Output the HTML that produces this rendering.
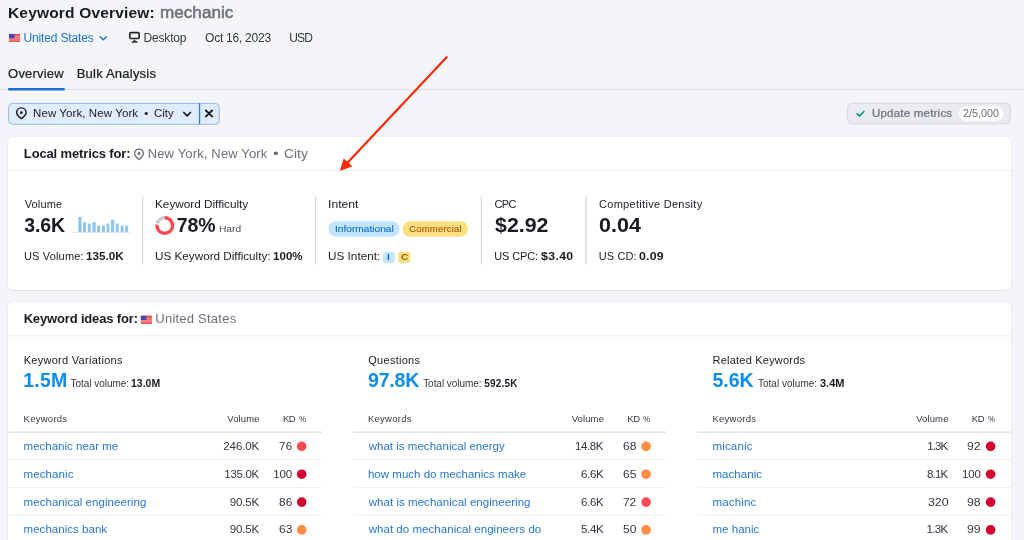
<!DOCTYPE html>
<html><head><meta charset="utf-8">
<style>
*{box-sizing:border-box;margin:0;padding:0}
html,body{width:1024px;height:540px;overflow:hidden;background:#f4f5f9;font-family:"Liberation Sans",sans-serif;color:#191b23}
.t,svg,.card{position:absolute}
.t{white-space:nowrap;line-height:1;transform-origin:0 0}
body{filter:blur(0.4px)}
.card{left:8px;width:1003px;background:#fff;border-radius:5px;box-shadow:0 0 0 1px rgba(25,27,35,.028),0 1px 1.5px rgba(25,27,35,.06)}
</style></head><body>
<div class="card" style="top:137px;height:153px"></div>
<div class="card" style="top:302px;height:260px"></div>
<svg style="left:0;top:0" width="1024" height="540" viewBox="0 0 1024 540">
<rect x="0" y="89" width="1024" height="1" fill="#e0e1e8"/>
<rect x="8" y="88" width="56.8" height="2.5" rx="1" fill="#1c6fd1"/>
<g transform="translate(9 33.9)"><rect width="11.1" height="8.1" rx="0.6" fill="#fc8686"/><rect y="0" width="11.1" height="1.7" rx="0.5" fill="#ff4239"/><rect y="3.1" width="11.1" height="1.1" fill="#fd6e6c"/><rect y="5.2" width="11.1" height="0.9" fill="#fb7272"/><rect y="6.9" width="11.1" height="1.2" rx="0.5" fill="#ea4d52"/><rect width="5.6" height="4.3" rx="0.5" fill="#4248b8"/></g>
<path d="M100.2 36.7 L103.3 39.8 L106.4 36.7" fill="none" stroke="#1b72cf" stroke-width="1.5" stroke-linecap="round" stroke-linejoin="round"/>
<g transform="translate(128 31)"><rect x="1.85" y="1.7" width="9.3" height="5.8" rx="1.1" fill="none" stroke="#262932" stroke-width="1.7"/><path d="M6.5 8.3 L8 10.4 L5 10.4 Z" fill="#262932"/><rect x="3.5" y="10.2" width="6.2" height="1.5" rx="0.7" fill="#262932"/></g>
<rect x="8.6" y="103.4" width="210.6" height="20.9" rx="4" fill="#e0ebfb" stroke="#8fb9eb" stroke-width="1"/>
<rect x="198.9" y="103.1" width="1.3" height="21" fill="#2f7fd8"/>
<path d="M21.35 107.85 C18.6 107.85 16.6 109.9 16.6 112.5 C16.6 115.2 19.3 117.2 21.35 118.6 C23.4 117.2 26.1 115.2 26.1 112.5 C26.1 109.9 24.1 107.85 21.35 107.85 Z" fill="none" stroke="#191b23" stroke-width="1.45" stroke-linejoin="round"/>
<circle cx="21.35" cy="112.65" r="1.45" fill="#191b23"/>
<path d="M183.8 112.5 L187.1 115.8 L190.4 112.5" fill="none" stroke="#191b23" stroke-width="1.7" stroke-linecap="round" stroke-linejoin="round"/>
<path d="M205.9 110.5 L212.1 116.4 M212.1 110.5 L205.9 116.4" fill="none" stroke="#191b23" stroke-width="1.9" stroke-linecap="round"/>
<rect x="847.7" y="103.3" width="162.5" height="20.5" rx="4" fill="#e9ebf1" stroke="#d6d8e0" stroke-width="1"/>
<path d="M857.2 113.9 L859.6 116.0 L863.9 111.5" fill="none" stroke="#0f9a7a" stroke-width="1.7" stroke-linecap="round" stroke-linejoin="round"/>
<rect x="958.6" y="106.3" width="44.9" height="14.6" rx="7.3" fill="#fff"/>
<rect x="8.3" y="169.8" width="1002.5" height="1" fill="#eaebf0"/>
<g transform="translate(133 147.8)"><path d="M6 1.25 C3.5 1.25 1.65 3.1 1.65 5.6 C1.65 8.3 4.3 10.3 6 11.7 C7.7 10.3 10.35 8.3 10.35 5.6 C10.35 3.1 8.5 1.25 6 1.25 Z" fill="none" stroke="#6c6e79" stroke-width="1.35" stroke-linejoin="round"/><circle cx="6" cy="5.65" r="1.45" fill="#6c6e79"/></g>
<rect x="142.2" y="196.3" width="1" height="68" fill="#cfd2d9"/>
<rect x="314.9" y="196.3" width="1" height="68" fill="#cfd2d9"/>
<rect x="480.8" y="196.3" width="1" height="68" fill="#cfd2d9"/>
<rect x="585.4" y="196.3" width="1" height="68" fill="#cfd2d9"/>
<rect x="72.5" y="232.1" width="57.5" height="0.9" fill="#e4e6ec"/>
<g fill="#90c6f1"><rect x="78.3" y="216.8" width="3.3" height="15.4"/><rect x="83.0" y="222.2" width="3.0" height="10"/><rect x="87.8" y="223.6" width="3.0" height="8.6"/><rect x="92.4" y="222.2" width="3.3" height="10"/><rect x="97.1" y="225.7" width="3.0" height="6.5"/><rect x="101.9" y="225.7" width="3.0" height="6.5"/><rect x="106.6" y="223.6" width="2.9" height="8.6"/><rect x="111.0" y="219.8" width="3.3" height="12.4"/><rect x="115.8" y="223.6" width="3.0" height="8.6"/><rect x="120.6" y="225.7" width="3.0" height="6.5"/><rect x="125.1" y="225.7" width="3.1" height="6.5"/></g>
<circle cx="164.75" cy="225.55" r="7.83" fill="none" stroke="#c9ccd5" stroke-width="3.25"/>
<circle cx="164.75" cy="225.55" r="7.83" fill="none" stroke="#ff4651" stroke-width="3.25" stroke-dasharray="38.1 49.2" transform="rotate(-90 164.75 225.55)"/>
<rect x="0" y="0" width="1.2" height="4" fill="#fff" transform="translate(164.75 225.55) rotate(-79) translate(-0.6 -10)"/>
<rect x="328.3" y="221.3" width="71.4" height="15.4" rx="7.7" fill="#c4e5fe"/>
<rect x="402.5" y="221.3" width="65.5" height="15.4" rx="7.7" fill="#fbdf80"/>
<rect x="382.8" y="251.7" width="12" height="11.4" rx="3" fill="#c4e5fe"/>
<rect x="398.3" y="251.7" width="12.2" height="11.4" rx="3" fill="#fbdf80"/>
<rect x="8.3" y="335.3" width="1002.5" height="1" fill="#eaebf0"/>
<g transform="translate(140.9 315.8)"><rect width="11.1" height="8.1" rx="0.6" fill="#fc8686"/><rect y="0" width="11.1" height="1.7" rx="0.5" fill="#ff4239"/><rect y="3.1" width="11.1" height="1.1" fill="#fd6e6c"/><rect y="5.2" width="11.1" height="0.9" fill="#fb7272"/><rect y="6.9" width="11.1" height="1.2" rx="0.5" fill="#ea4d52"/><rect width="5.6" height="4.3" rx="0.5" fill="#4248b8"/></g>
<rect x="8.3" y="431.4" width="313.5" height="1.5" fill="#dfe0e8"/>
<rect x="8.3" y="458.9" width="313.5" height="1" fill="#eceef2"/>
<rect x="8.3" y="486.8" width="313.5" height="1" fill="#eceef2"/>
<rect x="8.3" y="514.7" width="313.5" height="1" fill="#eceef2"/>
<rect x="353.1" y="431.4" width="312.7" height="1.5" fill="#dfe0e8"/>
<rect x="353.1" y="458.9" width="312.7" height="1" fill="#eceef2"/>
<rect x="353.1" y="486.8" width="312.7" height="1" fill="#eceef2"/>
<rect x="353.1" y="514.7" width="312.7" height="1" fill="#eceef2"/>
<rect x="697.3" y="431.4" width="313.5" height="1.5" fill="#dfe0e8"/>
<rect x="697.3" y="458.9" width="313.5" height="1" fill="#eceef2"/>
<rect x="697.3" y="486.8" width="313.5" height="1" fill="#eceef2"/>
<rect x="697.3" y="514.7" width="313.5" height="1" fill="#eceef2"/>
<circle cx="301.7" cy="446.4" r="4.8" fill="#ff4953"/>
<circle cx="301.7" cy="474.2" r="4.8" fill="#d1002f"/>
<circle cx="301.7" cy="502.1" r="4.8" fill="#d1002f"/>
<circle cx="301.7" cy="529.9" r="4.8" fill="#ff8c43"/>
<circle cx="646.1" cy="446.4" r="4.8" fill="#ff8c43"/>
<circle cx="646.1" cy="474.2" r="4.8" fill="#ff8c43"/>
<circle cx="646.1" cy="502.1" r="4.8" fill="#ff4953"/>
<circle cx="646.1" cy="529.9" r="4.8" fill="#ff8c43"/>
<circle cx="990.6" cy="446.4" r="4.8" fill="#d1002f"/>
<circle cx="990.6" cy="474.2" r="4.8" fill="#d1002f"/>
<circle cx="990.6" cy="502.1" r="4.8" fill="#d1002f"/>
<circle cx="990.6" cy="529.9" r="4.8" fill="#d1002f"/>
<line x1="447.3" y1="56.6" x2="347" y2="163.3" stroke="#fd2808" stroke-width="2.2"/><polygon points="339.8,171 343.7,158.4 352.5,166.2" fill="#fd2808"/>
</svg>
<div class="t" style="left:8.0px;top:5px;font-size:15.5px;color:#191b23;font-weight:bold;letter-spacing:0.175px;">Keyword Overview:</div>
<div class="t" style="left:159.82px;top:4px;font-size:16.5px;color:#6c6e79;-webkit-text-stroke:0.5px #6c6e79;transform:scaleX(1.038);">mechanic</div>
<div class="t" style="left:23.5px;top:32px;font-size:12.0px;color:#1b72cf;letter-spacing:-0.146px;">United States</div>
<div class="t" style="left:143.4px;top:32px;font-size:12.0px;color:#33363f;letter-spacing:-0.15px;">Desktop</div>
<div class="t" style="left:205.1px;top:32px;font-size:12.0px;color:#33363f;letter-spacing:-0.25px;">Oct 16, 2023</div>
<div class="t" style="left:289.25px;top:32px;font-size:12.0px;color:#33363f;letter-spacing:-0.875px;">USD</div>
<div class="t" style="left:8.1px;top:67px;font-size:13.0px;color:#191b23;-webkit-text-stroke:0.23px #191b23;letter-spacing:0.2px;">Overview</div>
<div class="t" style="left:76.7px;top:67px;font-size:13.0px;color:#191b23;-webkit-text-stroke:0.23px #191b23;letter-spacing:0.221px;">Bulk Analysis</div>
<div class="t" style="left:33.0px;top:108px;font-size:11.5px;color:#191b23;letter-spacing:0.088px;">New York, New York</div>
<div class="t" style="left:143.85px;top:108px;font-size:11.5px;color:#191b23;transform:scaleX(1.108);">•</div>
<div class="t" style="left:153.9px;top:108px;font-size:11.5px;color:#191b23;letter-spacing:0.033px;">City</div>
<div class="t" style="left:871.95px;top:108px;font-size:11.5px;color:#6c6e79;-webkit-text-stroke:0.21px #6c6e79;letter-spacing:0.219px;">Update metrics</div>
<div class="t" style="left:963.46px;top:109px;font-size:10px;color:#6c6e79;transform:scaleX(1.077);">2/5,000</div>
<div class="t" style="left:23.85px;top:147px;font-size:13.0px;color:#191b23;font-weight:bold;letter-spacing:-0.141px;">Local metrics for:</div>
<div class="t" style="left:147.7px;top:147px;font-size:13.0px;color:#6c6e79;letter-spacing:0.153px;">New York, New York</div>
<div class="t" style="left:273.18px;top:147px;font-size:13.0px;color:#6c6e79;transform:scaleX(1.25);">•</div>
<div class="t" style="left:283.9px;top:147px;font-size:13.0px;color:#6c6e79;transform:scaleX(1.065);">City</div>
<div class="t" style="left:24.7px;top:199px;font-size:11.0px;color:#191b23;letter-spacing:0.15px;">Volume</div>
<div class="t" style="left:24.2px;top:216px;font-size:19.5px;color:#191b23;font-weight:bold;letter-spacing:-0.067px;">3.6K</div>
<div class="t" style="left:23.95px;top:251px;font-size:11.0px;color:#191b23;letter-spacing:0.172px;">US Volume:</div>
<div class="t" style="left:85.5px;top:251px;font-size:11.0px;color:#191b23;font-weight:bold;transform:scaleX(1.064);">135.0K</div>
<div class="t" style="left:155.0px;top:199px;font-size:11.0px;color:#191b23;transform:scaleX(1.069);">Keyword Difficulty</div>
<div class="t" style="left:176.75px;top:216px;font-size:19.5px;color:#191b23;font-weight:bold;letter-spacing:-0.125px;">78%</div>
<div class="t" style="left:218.9px;top:224px;font-size:9.5px;color:#4a4d57;transform:scaleX(1.07);">Hard</div>
<div class="t" style="left:155.0px;top:251px;font-size:11.0px;color:#191b23;transform:scaleX(1.064);">US Keyword Difficulty:</div>
<div class="t" style="left:272.51px;top:251px;font-size:11.0px;color:#191b23;font-weight:bold;transform:scaleX(1.053);">100%</div>
<div class="t" style="left:327.59px;top:199px;font-size:11.0px;color:#191b23;transform:scaleX(1.106);">Intent</div>
<div class="t" style="left:334.5px;top:224px;font-size:9.5px;color:#0b6bc9;-webkit-text-stroke:0.11px #0b6bc9;transform:scaleX(1.07);">Informational</div>
<div class="t" style="left:409.2px;top:224px;font-size:9.5px;color:#a3590a;-webkit-text-stroke:0.11px #a3590a;letter-spacing:0.206px;">Commercial</div>
<div class="t" style="left:327.9px;top:251px;font-size:11.0px;color:#191b23;transform:scaleX(1.069);">US Intent:</div>
<div class="t" style="left:387.47px;top:252px;font-size:9.5px;color:#0b6bc9;font-weight:bold;transform:scaleX(1.067);">I</div>
<div class="t" style="left:400.53px;top:252px;font-size:9.5px;color:#a3590a;font-weight:bold;transform:scaleX(1.072);">C</div>
<div class="t" style="left:494.4px;top:199px;font-size:11.0px;color:#191b23;letter-spacing:-0.525px;">CPC</div>
<div class="t" style="left:494.63px;top:216px;font-size:19.5px;color:#191b23;font-weight:bold;transform:scaleX(1.095);">$2.92</div>
<div class="t" style="left:494.15px;top:251px;font-size:11.0px;color:#191b23;letter-spacing:-0.1px;">US CPC:</div>
<div class="t" style="left:540.72px;top:251px;font-size:11.0px;color:#191b23;font-weight:bold;letter-spacing:0.304px;transform:scaleX(1.12);">$3.40</div>
<div class="t" style="left:599.0px;top:199px;font-size:11.0px;color:#191b23;letter-spacing:0.297px;">Competitive Density</div>
<div class="t" style="left:598.67px;top:216px;font-size:19.5px;color:#191b23;font-weight:bold;transform:scaleX(1.103);">0.04</div>
<div class="t" style="left:598.75px;top:251px;font-size:11.0px;color:#191b23;letter-spacing:0.12px;">US CD:</div>
<div class="t" style="left:638.84px;top:251px;font-size:11.0px;color:#191b23;font-weight:bold;letter-spacing:0.19px;transform:scaleX(1.12);">0.09</div>
<div class="t" style="left:23.65px;top:312px;font-size:13.0px;color:#191b23;font-weight:bold;letter-spacing:-0.159px;">Keyword ideas for:</div>
<div class="t" style="left:155.3px;top:312px;font-size:13.0px;color:#6c6e79;letter-spacing:0.233px;">United States</div>
<div class="t" style="left:23.65px;top:355px;font-size:11.0px;color:#191b23;letter-spacing:0.285px;">Keyword Variations</div>
<div class="t" style="left:23.15px;top:371px;font-size:19.5px;color:#0a8df2;font-weight:bold;letter-spacing:0.25px;">1.5M</div>
<div class="t" style="left:70.55px;top:379px;font-size:10.0px;color:#33363f;letter-spacing:-0.029px;">Total volume:</div>
<div class="t" style="left:131.48px;top:379px;font-size:10.0px;color:#191b23;font-weight:bold;transform:scaleX(1.047);">13.0M</div>
<div class="t" style="left:23.55px;top:414px;font-size:9.5px;color:#33363f;letter-spacing:0.264px;">Keywords</div>
<div class="t" style="left:227.3px;top:414px;font-size:9.5px;color:#33363f;letter-spacing:0.11px;">Volume</div>
<div class="t" style="left:282.95px;top:414px;font-size:9.5px;color:#33363f;letter-spacing:-0.4px;">KD</div>
<div class="t" style="left:299.07px;top:415px;font-size:8.5px;color:#33363f;transform:scaleX(0.929);">%</div>
<div class="t" style="left:23.55px;top:441px;font-size:11.5px;color:#2476cf;letter-spacing:0.007px;">mechanic near me</div>
<div class="t" style="left:223.3px;top:441px;font-size:11.5px;color:#33363f;letter-spacing:-0.09px;">246.0K</div>
<div class="t" style="left:279.1px;top:441px;font-size:11.5px;color:#33363f;letter-spacing:0.25px;">76</div>
<div class="t" style="left:23.55px;top:469px;font-size:11.5px;color:#2476cf;letter-spacing:0.107px;">mechanic</div>
<div class="t" style="left:224.35px;top:469px;font-size:11.5px;color:#33363f;letter-spacing:-0.3px;">135.0K</div>
<div class="t" style="left:273.15px;top:469px;font-size:11.5px;color:#33363f;letter-spacing:-0.15px;">100</div>
<div class="t" style="left:23.55px;top:497px;font-size:11.5px;color:#2476cf;letter-spacing:0.062px;">mechanical engineering</div>
<div class="t" style="left:229.8px;top:497px;font-size:11.5px;color:#33363f;letter-spacing:-0.175px;">90.5K</div>
<div class="t" style="left:278.88px;top:497px;font-size:11.5px;color:#33363f;transform:scaleX(1.038);">86</div>
<div class="t" style="left:23.55px;top:524px;font-size:11.5px;color:#2476cf;letter-spacing:0.035px;">mechanics bank</div>
<div class="t" style="left:229.8px;top:524px;font-size:11.5px;color:#33363f;letter-spacing:-0.175px;">90.5K</div>
<div class="t" style="left:278.88px;top:524px;font-size:11.5px;color:#33363f;transform:scaleX(1.038);">63</div>
<div class="t" style="left:368.3px;top:355px;font-size:11.0px;color:#191b23;letter-spacing:0.269px;">Questions</div>
<div class="t" style="left:368.05px;top:371px;font-size:19.5px;color:#0a8df2;font-weight:bold;letter-spacing:-0.2px;">97.8K</div>
<div class="t" style="left:423.15px;top:379px;font-size:10.0px;color:#33363f;letter-spacing:-0.037px;">Total volume:</div>
<div class="t" style="left:484.25px;top:379px;font-size:10.0px;color:#191b23;font-weight:bold;letter-spacing:0.21px;">592.5K</div>
<div class="t" style="left:367.95px;top:414px;font-size:9.5px;color:#33363f;letter-spacing:0.264px;">Keywords</div>
<div class="t" style="left:571.7px;top:414px;font-size:9.5px;color:#33363f;letter-spacing:0.11px;">Volume</div>
<div class="t" style="left:627.35px;top:414px;font-size:9.5px;color:#33363f;letter-spacing:-0.4px;">KD</div>
<div class="t" style="left:643.47px;top:415px;font-size:8.5px;color:#33363f;transform:scaleX(0.929);">%</div>
<div class="t" style="left:368.7px;top:441px;font-size:11.5px;color:#2476cf;letter-spacing:0.021px;">what is mechanical energy</div>
<div class="t" style="left:574.95px;top:441px;font-size:11.5px;color:#33363f;letter-spacing:-0.363px;">14.8K</div>
<div class="t" style="left:623.07px;top:441px;font-size:11.5px;color:#33363f;transform:scaleX(1.055);">68</div>
<div class="t" style="left:367.95px;top:469px;font-size:11.5px;color:#2476cf;letter-spacing:0.018px;">how much do mechanics make</div>
<div class="t" style="left:581.1px;top:469px;font-size:11.5px;color:#33363f;letter-spacing:-0.367px;">6.6K</div>
<div class="t" style="left:623.07px;top:469px;font-size:11.5px;color:#33363f;transform:scaleX(1.055);">65</div>
<div class="t" style="left:368.7px;top:497px;font-size:11.5px;color:#2476cf;letter-spacing:0.047px;">what is mechanical engineering</div>
<div class="t" style="left:581.1px;top:497px;font-size:11.5px;color:#33363f;letter-spacing:-0.367px;">6.6K</div>
<div class="t" style="left:623.39px;top:497px;font-size:11.5px;color:#33363f;transform:scaleX(1.03);">72</div>
<div class="t" style="left:368.7px;top:524px;font-size:11.5px;color:#2476cf;letter-spacing:0.04px;">what do mechanical engineers do</div>
<div class="t" style="left:580.9px;top:524px;font-size:11.5px;color:#33363f;letter-spacing:-0.3px;">5.4K</div>
<div class="t" style="left:622.88px;top:524px;font-size:11.5px;color:#33363f;transform:scaleX(1.05);">50</div>
<div class="t" style="left:712.55px;top:355px;font-size:11.0px;color:#191b23;letter-spacing:0.217px;">Related Keywords</div>
<div class="t" style="left:712.55px;top:371px;font-size:19.5px;color:#0a8df2;font-weight:bold;letter-spacing:-0.017px;">5.6K</div>
<div class="t" style="left:757.95px;top:379px;font-size:10.0px;color:#33363f;letter-spacing:0.021px;">Total volume:</div>
<div class="t" style="left:819.72px;top:379px;font-size:10.0px;color:#191b23;font-weight:bold;transform:scaleX(1.101);">3.4M</div>
<div class="t" style="left:712.45px;top:414px;font-size:9.5px;color:#33363f;letter-spacing:0.264px;">Keywords</div>
<div class="t" style="left:916.2px;top:414px;font-size:9.5px;color:#33363f;letter-spacing:0.11px;">Volume</div>
<div class="t" style="left:971.85px;top:414px;font-size:9.5px;color:#33363f;letter-spacing:-0.4px;">KD</div>
<div class="t" style="left:987.97px;top:415px;font-size:8.5px;color:#33363f;transform:scaleX(0.929);">%</div>
<div class="t" style="left:712.45px;top:441px;font-size:11.5px;color:#2476cf;letter-spacing:0.167px;">micanic</div>
<div class="t" style="left:927.15px;top:441px;font-size:11.5px;color:#33363f;letter-spacing:-0.883px;">1.3K</div>
<div class="t" style="left:967.47px;top:441px;font-size:11.5px;color:#33363f;transform:scaleX(1.064);">92</div>
<div class="t" style="left:712.45px;top:469px;font-size:11.5px;color:#2476cf;letter-spacing:0.05px;">machanic</div>
<div class="t" style="left:927.0px;top:469px;font-size:11.5px;color:#33363f;letter-spacing:-0.833px;">8.1K</div>
<div class="t" style="left:961.95px;top:469px;font-size:11.5px;color:#33363f;letter-spacing:-0.1px;">100</div>
<div class="t" style="left:712.45px;top:497px;font-size:11.5px;color:#2476cf;letter-spacing:0.175px;">machinc</div>
<div class="t" style="left:927.86px;top:497px;font-size:11.5px;color:#33363f;transform:scaleX(1.074);">320</div>
<div class="t" style="left:967.47px;top:497px;font-size:11.5px;color:#33363f;transform:scaleX(1.064);">98</div>
<div class="t" style="left:712.45px;top:524px;font-size:11.5px;color:#2476cf;letter-spacing:0.036px;">me hanic</div>
<div class="t" style="left:926.45px;top:524px;font-size:11.5px;color:#33363f;letter-spacing:-0.65px;">1.3K</div>
<div class="t" style="left:967.47px;top:524px;font-size:11.5px;color:#33363f;transform:scaleX(1.064);">99</div>
</body></html>
